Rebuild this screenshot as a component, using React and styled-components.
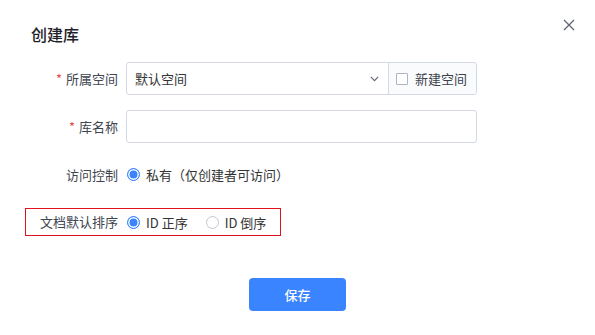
import React from "react";
import styled, { createGlobalStyle } from "styled-components";

const Global = createGlobalStyle`
  html, body { margin: 0; padding: 0; background: #fff; }
  body { font-family: "Noto Sans CJK SC", "Noto Sans", sans-serif; font-size: 13px; color: #333; }
  * { box-sizing: border-box; }
`;

const Dialog = styled.div`
  width: 595px;
  height: 335px;
  background: #fff;
  display: flex;
  flex-direction: column;
`;

const Header = styled.div`
  display: flex;
  justify-content: space-between;
  align-items: flex-start;
  padding: 0 20px 0 31px;
`;

const Title = styled.h2`
  margin: 22px 0 0;
  font-size: 16px;
  line-height: 24px;
  font-weight: 500;
  color: #1f2329;
`;

const Close = styled.button`
  margin-top: 19px;
  width: 12px;
  height: 12px;
  padding: 0;
  border: none;
  background: none;
  display: flex;
  cursor: pointer;
`;

const Form = styled.div`
  margin-top: 16px;
  padding-left: 25px;
  display: flex;
  flex-direction: column;
  gap: 15px;
`;

const Row = styled.div`
  display: flex;
  align-items: center;
  height: ${(p) => (p.$compact ? "28px" : "33px")};
  width: ${(p) => (p.$highlight ? "256px" : "auto")};
  margin-top: ${(p) => (p.$compact ? "2px" : "0")};
  outline: ${(p) => (p.$highlight ? "1px solid #e3101e" : "none")};
  outline-offset: -1px;
`;

const Label = styled.label`
  width: 93px;
  margin-right: 8px;
  text-align: right;
  color: #40454f;
  font-size: 13px;
  line-height: 20px;
  white-space: nowrap;
`;

const Star = styled.span`
  color: #ea4a4a;
  margin-right: 4px;
`;

const InputGroup = styled.div`
  display: flex;
  width: 351px;
  height: 33px;
  border: 1px solid #d3d8e4;
  border-radius: 3px;
  overflow: hidden;
`;

const Select = styled.div`
  flex: 1;
  display: flex;
  align-items: center;
  justify-content: space-between;
  padding: 0 9px 0 8px;
  color: #333;
`;

const Addon = styled.div`
  width: 88px;
  border-left: 1px solid #d3d8e4;
  background: #fafbfd;
  display: flex;
  align-items: center;
  padding-left: 7px;
  gap: 7px;
  color: #3d424c;
`;

const Checkbox = styled.span`
  width: 12px;
  height: 12px;
  border: 1px solid #aeb4c0;
  border-radius: 1px;
  background: #fff;
`;

const TextInput = styled.input`
  width: 351px;
  height: 33px;
  border: 1px solid #d3d8e4;
  border-radius: 3px;
  outline: none;
  padding: 0 8px;
  font: inherit;
`;

const RadioGroup = styled.div`
  display: flex;
  align-items: center;
  gap: 17px;
`;

const RadioOption = styled.span`
  display: flex;
  align-items: center;
  gap: 6px;
  color: #333;
  white-space: nowrap;
`;

const RadioDot = styled.span`
  width: 13px;
  height: 13px;
  border-radius: 50%;
  border: 1px solid ${(p) => (p.$checked ? "#3a84ff" : "#c2c7d0")};
  background: ${(p) => (p.$checked ? "#3a84ff" : "#fff")};
  box-shadow: ${(p) => (p.$checked ? "inset 0 0 0 1.5px #fff" : "none")};
  margin-left: 1px;
`;

const Footer = styled.div`
  display: flex;
  justify-content: center;
  margin-top: 42px;
`;

const PrimaryButton = styled.button`
  width: 97px;
  height: 33px;
  border: none;
  border-radius: 4px;
  background: #3a84ff;
  color: #fff;
  font: inherit;
  font-size: 13px;
  font-weight: 500;
  cursor: pointer;
`;

const Radio = ({ checked, children }) => (
  <RadioOption>
    <RadioDot $checked={checked} />
    {children}
  </RadioOption>
);

export default function App() {
  return (
    <>
      <Global />
      <Dialog>
        <Header>
          <Title>创建库</Title>
          <Close aria-label="关闭">
            <svg width="12" height="12" viewBox="0 0 12 12">
              <path d="M1 1 L11 11 M11 1 L1 11" stroke="#5f6673" strokeWidth="1.3" fill="none" />
            </svg>
          </Close>
        </Header>
        <Form>
          <Row>
            <Label><Star>*</Star>所属空间</Label>
            <InputGroup>
              <Select>
                <span>默认空间</span>
                <svg width="9" height="6" viewBox="0 0 9 6">
                  <path d="M0.8 0.8 L4.5 4.6 L8.2 0.8" stroke="#5f6673" strokeWidth="1.1" fill="none" />
                </svg>
              </Select>
              <Addon>
                <Checkbox />
                新建空间
              </Addon>
            </InputGroup>
          </Row>
          <Row>
            <Label><Star>*</Star>库名称</Label>
            <TextInput />
          </Row>
          <Row>
            <Label>访问控制</Label>
            <RadioGroup>
              <Radio checked>私有（仅创建者可访问）</Radio>
            </RadioGroup>
          </Row>
          <Row $compact $highlight>
            <Label>文档默认排序</Label>
            <RadioGroup>
              <Radio checked>ID 正序</Radio>
              <Radio>ID 倒序</Radio>
            </RadioGroup>
          </Row>
        </Form>
        <Footer>
          <PrimaryButton>保存</PrimaryButton>
        </Footer>
      </Dialog>
    </>
  );
}
